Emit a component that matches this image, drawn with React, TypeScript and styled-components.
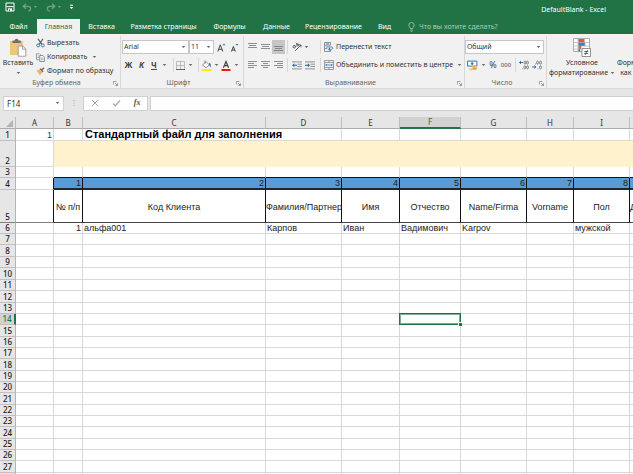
import React from "react";
import styled, { createGlobalStyle, css } from "styled-components";

const ui = `"Noto Sans", "Open Sans", sans-serif`;
const sheet = `"Liberation Sans", Arial, sans-serif`;
const green = "#217346";

const GlobalStyle = createGlobalStyle`
  *, *::before, *::after { box-sizing: border-box; }
  body { margin: 0; background: #e6e6e6; }
  button, select, input { font: inherit; color: inherit; margin: 0; padding: 0; border: 0; background: none; border-radius: 0; }
  svg { display: block; flex: none; }
`;

const Window = styled.div`
  display: flex;
  flex-direction: column;
  height: 100vh;
  overflow: hidden;
  font: 7px/10px ${ui};
  color: #333;
`;

/* ---------- title bar and tabs ---------- */

const TitleBar = styled.header`
  display: flex;
  align-items: center;
  flex: none;
  height: 19px;
  padding: 1px 27px 0 4px;
  background: ${green};
  color: #fff;
`;

const QuickAccess = styled.div`
  display: flex;
  align-items: center;
  height: 12px;
  gap: 4px;
  flex: 1;
  align-self: flex-start;
`;

const QuickButton = styled.button<{ $dim?: boolean; $w: number }>`
  display: flex;
  align-items: center;
  justify-content: center;
  gap: 1px;
  width: ${(p) => p.$w}px;
  height: 12px;
  opacity: ${(p) => (p.$dim ? 0.35 : 1)};
`;

const FileName = styled.h1`
  margin: 0;
  font: 7px/10px ${ui};
`;

const TabBar = styled.nav`
  display: flex;
  align-items: stretch;
  flex: none;
  height: 15px;
  background: ${green};
  color: #fff;
`;

const Tab = styled.button<{ $w: number; $active?: boolean }>`
  flex: none;
  width: ${(p) => p.$w}px;
  padding-top: 1px;
  text-align: center;
  white-space: nowrap;
  ${(p) => p.$active && css`background: #f1f1f1; color: ${green};`}
`;

const TellMe = styled.button`
  display: flex;
  align-items: center;
  gap: 4px;
  padding: 1px 0 0 8px;
  color: #a9cdb9;
  white-space: nowrap;
`;

/* ---------- ribbon ---------- */

const Ribbon = styled.section`
  display: flex;
  flex: none;
  height: 55px;
  overflow: hidden;
  background: #f1f1f1;
  border-bottom: 1px solid #d9d9d9;
`;

const Group = styled.section<{ $w: number }>`
  display: flex;
  flex-direction: column;
  flex: none;
  width: ${(p) => p.$w}px;
  margin-top: 2px;
  border-right: 1px solid #d8d8d8;
`;

const GroupBody = styled.div`
  flex: 1;
  display: flex;
  min-height: 0;
`;

const GroupFoot = styled.div`
  display: flex;
  align-items: center;
  flex: none;
  height: 10px;
  padding-right: 2px;
  color: #666;
`;

const GroupName = styled.h2`
  flex: 1;
  margin: 0;
  font: 7px/10px ${ui};
  text-align: center;
`;

const Lines = styled.div`
  display: flex;
  flex-direction: column;
  flex: 1;
  gap: 4px;
  padding-top: 4px;
`;

const ToolRow = styled.div`
  display: flex;
  align-items: center;
  flex: none;
  height: 14px;
`;

const Tool = styled.button<{ $w: number; $on?: boolean }>`
  display: flex;
  align-items: center;
  justify-content: center;
  flex: none;
  width: ${(p) => p.$w}px;
  height: 14px;
  background: ${(p) => (p.$on ? "#c6c6c6" : "transparent")};
`;

const Letter = styled.span<{ $kind: "bold" | "italic" | "underline" }>`
  font-size: 8px;
  font-weight: 700;
  color: #444;
  ${(p) => p.$kind === "italic" && css`font-style: italic;`}
  ${(p) => p.$kind === "underline" && css`text-decoration: underline;`}
`;

const Divider = styled.span<{ $left?: number; $right?: number }>`
  flex: none;
  width: 1px;
  height: 14px;
  margin: 0 ${(p) => p.$right ?? 0}px 0 ${(p) => p.$left ?? 0}px;
  background: #d8d8d8;
`;

const Labelled = styled.button`
  display: flex;
  align-items: center;
  gap: 2px;
  flex: none;
  height: 14px;
  white-space: nowrap;
`;

const MenuLabel = styled.span`
  margin-right: 3px;
`;

const ClipLines = styled.div`
  display: flex;
  flex-direction: column;
  align-items: flex-start;
`;

const BigTool = styled.button<{ $w: number }>`
  display: flex;
  flex-direction: column;
  align-items: center;
  flex: none;
  width: ${(p) => p.$w}px;
  padding-top: 2px;
  white-space: nowrap;
  gap: 1px;
`;

const BigLine = styled.span`
  display: flex;
  align-items: center;
  gap: 2px;
  height: 9px;
`;

const Picker = styled.label<{ $w: number }>`
  display: grid;
  grid-template: 100% / 1fr 7px;
  align-items: center;
  flex: none;
  width: ${(p) => p.$w}px;
  height: 14px;
  background: #fff;
  border: 1px solid #c6c6c6;

  select {
    grid-area: 1 / 1 / 2 / 3;
    appearance: none;
    width: 100%;
    height: 12px;
    padding-left: 1px;
    line-height: 12px;
  }
  svg { grid-area: 1 / 2; }
`;

/* ---------- formula bar ---------- */

const FormulaBar = styled.div`
  display: flex;
  align-items: center;
  flex: none;
  height: 28px;
  padding-left: 3px;
  background: #e6e6e6;
`;

const NameBox = styled.div`
  display: flex;
  align-items: center;
  width: 61px;
  height: 15px;
  padding-right: 3px;
  background: #fff;
  border: 1px solid #d0d0d0;

  input { flex: 1; min-width: 0; padding-left: 3px; outline: 0; height: 13px; font-size: 8px; }
`;

const FormulaTools = styled.div`
  display: flex;
  align-items: center;
  justify-content: space-around;
  width: 65px;
  height: 15px;
  margin-right: 2px;
  background: #fff;
  border: 1px solid #d0d0d0;
`;

const Grip = styled.span`
  width: 19px;
  display: flex;
  justify-content: center;
`;

const FormulaInput = styled.input`
  flex: 1;
  min-width: 0;
  height: 15px;
  background: #fff;
  border: 1px solid #d0d0d0;
  border-right: 0;
  outline: 0;
`;

/* ---------- sheet ---------- */

const Viewport = styled.main`
  flex: 1;
  min-height: 0;
  overflow: hidden;
  background: #fff;
`;

const Sheet = styled.table`
  width: 100%;
  min-width: 694px;
  table-layout: fixed;
  border-collapse: separate;
  border-spacing: 0;
  font: 9px/10px ${sheet};
  color: #222;
`;

const Col = styled.col<{ $w?: number }>`
  ${(p) => p.$w && css`width: ${p.$w}px;`}
`;

const Row = styled.tr<{ $h: number }>`
  height: ${(p) => p.$h}px;
`;

const ColHead = styled.th<{ $on?: boolean }>`
  padding: 0;
  font: 8px/10px ${ui};
  color: ${(p) => (p.$on ? green : "#333")};
  background: ${(p) => (p.$on ? "#d2d2d2" : "#e6e6e6")};
  border-right: 1px solid #bdbdbd;
  border-bottom: ${(p) => (p.$on ? `2px solid ${green}` : "1px solid #ababab")};
`;

const RowHead = styled.th<{ $on?: boolean; $freeze?: boolean }>`
  padding: 0;
  font: 500 8px/10px ${ui};
  vertical-align: bottom;
  text-align: center;
  color: ${(p) => (p.$on ? green : "#222")};
  background: ${(p) => (p.$on ? "#d2d2d2" : "#e6e6e6")};
  border-right: ${(p) => (p.$on ? `2px solid ${green}` : "1px solid #b4b4b4")};
  border-bottom: 1px solid ${(p) => (p.$freeze ? "#808080" : "#c0c0c0")};
`;

type Kind = "plain" | "edge" | "marker" | "title" | "band" | "top" | "number" | "head" | "freeze" | "active";

const kinds: Record<Kind, ReturnType<typeof css> | string> = {
  plain: "",
  edge: css`border-right-color: #111;`,
  marker: css`color: #1f3864;`,
  title: css`font-size: 11px; font-weight: 700; line-height: 11px; color: #000; padding-left: 2px;`,
  band: css`background: #fff2cc; border-color: #fff2cc;`,
  top: css`border-bottom-color: #111;`,
  number: css`background: #5b9bd5; border-right-color: #111; border-bottom: 2px solid #1c2733;`,
  head: css`border-right-color: #111; border-bottom-color: #444; text-align: center; padding: 1px 0 0;`,
  freeze: css`border-right-color: #111; border-bottom-color: #808080;`,
  active: css`
    position: relative;
    &::before {
      content: "";
      position: absolute;
      inset: -1px;
      border: 1px solid ${green};
      outline: 1px solid #7fae94;
      outline-offset: -2px;
    }
    &::after {
      content: "";
      position: absolute;
      right: -2px;
      bottom: -2px;
      width: 4px;
      height: 4px;
      background: ${green};
      border-top: 1px solid #fff;
      border-left: 1px solid #fff;
    }
  `,
};

const Cell = styled.td<{ $kind?: Kind; $right?: boolean }>`
  padding: 0 1px;
  white-space: nowrap;
  text-align: ${(p) => (p.$right ? "right" : "left")};
  border-right: 1px solid #d9d9d9;
  border-bottom: 1px solid #d9d9d9;
  ${(p) => kinds[p.$kind ?? "plain"]}
`;

/* ---------- icons ---------- */

const Chevron = ({ light }: { light?: boolean }) => (
  <svg width="5" height="4" viewBox="0 0 5 4"><path d="M.7 1h3.6L2.5 3z" fill={light ? "#fff" : "#666"} /></svg>
);

const SaveIcon = () => (
  <svg width="10" height="10" viewBox="0 0 10 10" fill="none" stroke="#fff">
    <path d="M1 1h8v8H1z" strokeWidth="1" /><path d="M1.5 4.6h7" strokeWidth="1" />
    <path d="M3 6.3h4V9H3z" fill="#fff" stroke="none" /><path d="M4 7.3h1V9H4z" fill={green} stroke="none" />
  </svg>
);

const UndoIcon = ({ flip }: { flip?: boolean }) => (
  <svg width="10" height="9" viewBox="0 0 10 9" fill="none" stroke="#fff" strokeWidth="1.2">
    <g transform={flip ? "translate(10 0) scale(-1 1)" : undefined}>
      <path d="M4 .8 1.2 3.3 4 5.8M1.4 3.3h4.4c4 0 3.6 4 .4 5" />
    </g>
  </svg>
);

const CustomizeIcon = () => (
  <svg width="5" height="6" viewBox="0 0 5 6" fill="#fff"><path d="M1 .8h3v1H1zM.7 3h3.6L2.5 5z" /></svg>
);

const BulbIcon = () => (
  <svg width="7" height="10" viewBox="0 0 7 10" fill="none" stroke="#a9cdb9" strokeWidth=".8">
    <path d="M2.3 6.6C2.3 5.4.8 4.8.8 3.2a2.7 2.7 0 0 1 5.4 0c0 1.6-1.5 2.2-1.5 3.4zM2.3 8h2.4M2.6 9.2h1.8" />
  </svg>
);

const PasteIcon = () => (
  <svg width="18" height="19" viewBox="0 0 18 19">
    <path d="M1 3h13v14H1z" fill="#efc47c" />
    <path d="M3.5 2.5h2.3a1.8 1.8 0 0 1 3.6 0h2.3V5H3.5z" fill="#6d6d6d" />
    <path d="M9.2 8h4.6l3 3v7.2H9.2z" fill="#fff" stroke="#8a8a8a" strokeWidth=".8" />
    <path d="M13.6 8v3.2h3.2" fill="none" stroke="#8a8a8a" strokeWidth=".8" />
  </svg>
);

const CutIcon = () => (
  <svg width="9" height="10" viewBox="0 0 9 10" fill="none">
    <path d="M2 .8 6 6.6M7 .8 3 6.6" stroke="#555" strokeWidth="1.1" />
    <circle cx="2.2" cy="7.4" r="1.5" stroke="#3f7fb8" /><circle cx="6.8" cy="7.4" r="1.5" stroke="#3f7fb8" />
  </svg>
);

const CopyIcon = () => (
  <svg width="9" height="9" viewBox="0 0 9 9" fill="#fff" strokeWidth=".7">
    <path d="M.5.8h3l1.3 1.3v4.6H.5z" stroke="#777" /><path d="M1.4 3h2M1.4 4.5h2" stroke="#4a86bd" />
    <path d="M3.8 2.5h3l1.6 1.6v4.4H3.8z" stroke="#666" /><path d="M4.8 5h2.6M4.8 6.7h2.6" stroke="#4a86bd" />
  </svg>
);

const BrushIcon = () => (
  <svg width="9" height="9" viewBox="0 0 9 9">
    <path d="m.4 3.8 3-1.6 2.8 3.4L4 8.6z" fill="#efb765" /><path d="m3.6 2 1.2-.8 2.8 3.2-1 1z" fill="#666" />
    <path d="m6 2.7 2-2" stroke="#666" strokeWidth="1.5" />
  </svg>
);

const LauncherIcon = () => (
  <svg width="5" height="5" viewBox="0 0 5 5" fill="none" stroke="#777" strokeWidth=".7">
    <path d="M.4 3.5V.5h3M2 2l2.3 2.3M4.5 2.3v2.2H2.3" />
  </svg>
);

const GrowIcon = ({ small }: { small?: boolean }) => (
  <svg width="9" height="9" viewBox="0 0 9 9" fill="none">
    {small
      ? <path d="m1.4 8.5 2-5 2 5M2 7h2.8" stroke="#444" />
      : <path d="m.8 8.5 2.5-6.7 2.5 6.7M1.6 6.3h3.5" stroke="#444" />}
    <path d={small ? "M5.5 1h3L7 2.7z" : "M5.5 2.3h3L7 .6z"} fill="#2f75b5" />
  </svg>
);

const BorderIcon = () => (
  <svg width="9" height="9" viewBox="0 0 9 9" fill="none">
    <path d="M.5.5h8v8M.5.5v8M4.5.5v8M.5 4.5h8" stroke="#a8a8a8" strokeWidth=".7" /><path d="M0 8.5h9" stroke="#666" />
  </svg>
);

const FillIcon = () => (
  <svg width="11" height="11" viewBox="0 0 11 11">
    <path d="m1.5 5 3.6-3.4L8.4 5 5 7.7z" fill="#fff" stroke="#777" strokeWidth=".8" />
    <path d="M4 .6v3" stroke="#666" strokeWidth=".8" /><path d="M8 3c2 0 2 2 1.5 4.4L8 5z" fill="#3876ad" />
    <path d="M.5 9h10v2H.5z" fill="#ffed00" />
  </svg>
);

const FontColorIcon = () => (
  <svg width="10" height="11" viewBox="0 0 10 11">
    <path d="m2.4 7.8 2.6-6.3 2.6 6.3M3.3 5.6h3.4" fill="none" stroke="#444" strokeWidth="1.2" />
    <path d="M.5 9h9v2h-9z" fill="#f11414" />
  </svg>
);

const bars: Record<string, string> = {
  top: "M0 1.5h9M1 3.5h7M0 5.5h9",
  middle: "M0 2.5h9M1 4.5h7M0 6.5h9",
  bottom: "M0 4.5h9M1 6.5h7M0 8.5h9",
  left: "M0 1.5h9M0 3.5h6M0 5.5h9M0 7.5h6",
  center: "M0 1.5h9M2 3.5h5M0 5.5h9M2 7.5h5",
  right: "M0 1.5h9M3 3.5h6M0 5.5h9M3 7.5h6",
};

const BarsIcon = ({ kind }: { kind: string }) => (
  <svg width="9" height="10" viewBox="0 0 9 10" fill="none"><path d={bars[kind]} stroke="#777" strokeWidth=".8" /></svg>
);

const OrientationIcon = () => (
  <svg width="10" height="10" viewBox="0 0 10 10" fill="none" stroke="#555" strokeWidth=".9">
    <path d="m3 9 6-6M6.8 3H9v2.2" /><circle cx="2.2" cy="4.8" r="1.2" /><path d="m2.6 3.2 1.6 1.8M4 .8l2.4 2.6" />
    <circle cx="5.6" cy="2.8" r="1" />
  </svg>
);

const IndentIcon = ({ more }: { more?: boolean }) => (
  <svg width="10" height="9" viewBox="0 0 10 9" fill="none">
    <path d="M0 .9h10M5.5 3.2H10M5.5 5.5H10M0 7.9h10" stroke="#777" strokeWidth=".8" />
    <path d={more ? "M0 4.3h3.6" : "M1.4 4.3H5"} stroke="#2f75b5" strokeWidth="1.2" />
    <path d={more ? "m2.8 2.2 2.4 2.1-2.4 2.1z" : "M2.4 2.2 0 4.3l2.4 2.1z"} fill="#2f75b5" />
  </svg>
);

const WrapIcon = () => (
  <svg width="10" height="10" viewBox="0 0 10 10" fill="none">
    <path d="M.5.5h6M.5.5v9M.5 3.2h6V.5M.5 6.6h3M.5 9.5h6V8" stroke="#777" strokeWidth=".8" />
    <path d="M2 1.900h3M2 5h5.500c1.800 0 1.800 2.300 0 2.300H5" stroke="#3f7fb8" strokeWidth=".9" />
    <path d="M6 5.600 4 7.300 6 9z" fill="#2f75b5" />
  </svg>
);

const MergeIcon = () => (
  <svg width="10" height="10" viewBox="0 0 10 10" fill="none">
    <path d="M.5.5h9v9h-9zM.5 2.500h9M.5 7.500h9M5 .5v2M5 7.500v2" stroke="#888" strokeWidth=".8" />
    <path d="M2.500 5h5" stroke="#2f75b5" strokeWidth=".8" /><path d="m1 5 1.800-1.300v2.600zM9 5 7.200 3.700v2.600z" fill="#2f75b5" />
  </svg>
);

const MoneyIcon = () => (
  <svg width="11" height="11" viewBox="0 0 11 11">
    <path d="M.6 1.100h9.300v5H.6z" fill="#fff" stroke="#2f75b5" strokeWidth="1" />
    <circle cx="5.200" cy="3.600" r="1.300" fill="#2f75b5" />
    <ellipse cx="7.500" cy="6.800" rx="2.600" ry="1.200" fill="#efb765" /><ellipse cx="7.500" cy="8.800" rx="2.600" ry="1.200" fill="#e3a750" />
    <ellipse cx="4" cy="9.300" rx="2" ry="1.100" fill="#efc47c" />
  </svg>
);

const DecimalIcon = ({ less }: { less?: boolean }) => (
  <svg width="10" height="10" viewBox="0 0 10 10" fill="none" strokeWidth=".8">
    <g stroke="#666">
      <ellipse cx={less ? 5.5 : 6} cy="2.600" rx=".9" ry="1.600" /><ellipse cx="8.500" cy="2.600" rx=".9" ry="1.600" />
      <ellipse cx={less ? 8.5 : 5.8} cy="7.300" rx=".9" ry="1.600" />
      {!less && <ellipse cx="8.500" cy="7.300" rx=".9" ry="1.600" />}
      <path d={less ? "M6 8.500v.8M3.500 3.600v.8" : "M3.600 8.500v.8"} />
    </g>
    <path d={less ? "M0 7h3.500M2.300 5.600 4 7 2.300 8.400" : "M.6 2.500h3.400M2 1.100.4 2.500 2 3.900"} stroke="#2f75b5" strokeWidth="1" />
  </svg>
);

const ConditionalIcon = () => (
  <svg width="18" height="19" viewBox="0 0 18 19" fill="none">
    <path d="M.5.5h16v13H.5z" fill="#fff" stroke="#999" strokeWidth=".8" />
    <path d="M5.300 1h6v3.500h-6z" fill="#e0593f" /><path d="M5.300 4.500h7V8h-7z" fill="#3f7fc0" />
    <path d="M5.300 8h3v3h-3z" fill="#e0593f" /><path d="M5.300 11h2v2.500h-2z" fill="#3f7fc0" />
    <path d="M.5 4.500h16M.5 8h16M.5 11h8M5 .5v13M11.500 .5v8" stroke="#aaa" strokeWidth=".6" />
    <path d="M9 10.500h8.500v8H9z" fill="#fff" stroke="#777" strokeWidth=".8" />
    <path d="M11.200 13.500h4M11.200 15.500h4M14.500 12 12 17" stroke="#444" strokeWidth=".8" />
  </svg>
);

const TableIcon = () => (
  <svg width="18" height="19" viewBox="0 0 18 19" fill="none">
    <path d="M.5.5h16v16H.5z" fill="#fff" stroke="#999" /><path d="M5 5h11v11H5z" fill="#9dc3e6" />
    <path d="M.5 5h16M.5 10h16M5 .5v16M11 .5v16" stroke="#999" />
  </svg>
);

const CellStylesIcon = () => (
  <svg width="18" height="19" viewBox="0 0 18 19" fill="none">
    <path d="M.5.5h16v16H.5z" fill="#fff" stroke="#999" /><path d="M5 5h7v5H5z" fill="#f4b183" />
    <path d="M.5 5h16M.5 10h16M5 .5v16M12 .5v16" stroke="#999" />
  </svg>
);

const CancelIcon = () => (
  <svg width="8" height="8" viewBox="0 0 8 8"><path d="m1 1 6 6M7 1 1 7" stroke="#aaa" /></svg>
);
const AcceptIcon = () => (
  <svg width="9" height="8" viewBox="0 0 9 8" fill="none"><path d="m1 4.500 2.300 2.300L8 1.500" stroke="#aaa" strokeWidth="1.300" /></svg>
);
const GripIcon = () => (
  <svg width="2" height="8" viewBox="0 0 2 8" fill="#aaa"><path d="M.5 1h1v1h-1zM.5 3.500h1v1h-1zM.5 6h1v1h-1z" /></svg>
);
const CornerIcon = () => (
  <svg width="15" height="10" viewBox="0 0 15 10"><path d="M13 2v7H6z" fill="#b4b4b4" /></svg>
);

const FxLabel = styled.span`
  font: italic 700 8px/10px "Liberation Serif", serif;
  color: #555;
`;

const Glyph = styled.span<{ $size: number }>`
  font-size: ${(p) => p.$size}px;
  color: #444;
`;

/* ---------- data ---------- */

const columns: [string, number | undefined][] = [
  ["A", 38], ["B", 29], ["C", 183], ["D", 76], ["E", 58], ["F", 61], ["G", 66], ["H", 47], ["I", 56], ["J", undefined],
];

const headings = ["№ п/п", "Код Клиента", "Фамилия/Партнер", "Имя", "Отчество", "Name/Firma", "Vorname", "Пол", "Дата рождения"];
const record = ["1", "альфа001", "Карпов", "Иван", "Вадимович", "Karpov", "", "мужской", ""];

const tabs: [string, number][] = [
  ["Файл", 37], ["Главная", 43], ["Вставка", 43], ["Разметка страницы", 81], ["Формулы", 51],
  ["Данные", 43], ["Рецензирование", 71], ["Вид", 31],
];

const rowHeight = (n: number) => (n < 13 ? (n % 2 ? 11 : 12) : n % 3 ? 11 : 12);
const emptyRows = Array.from({ length: 34 }, (_, i) => i + 7);

const Foot = ({ name, launcher = true }: { name: string; launcher?: boolean }) => (
  <GroupFoot>
    <GroupName>{name}</GroupName>
    {launcher && <button type="button" aria-label={name}><LauncherIcon /></button>}
  </GroupFoot>
);

const Menu = ({ label, w = 8 }: { label: string; w?: number }) => (
  <Tool type="button" $w={w} aria-label={label}><Chevron /></Tool>
);

const FontLines = styled(Lines)`padding-left: 1px;`;
const AlignLines = styled(Lines)`padding-left: 2px;`;
const Push = styled.span`flex: 1;`;

export default function App() {
  return (
    <Window>
      <GlobalStyle />
      <TitleBar>
        <QuickAccess>
          <QuickButton type="button" $w={12} aria-label="Сохранить"><SaveIcon /></QuickButton>
          <QuickButton type="button" $w={20} $dim aria-label="Отменить"><UndoIcon /><Chevron light /></QuickButton>
          <QuickButton type="button" $w={20} $dim aria-label="Вернуть"><UndoIcon flip /><Chevron light /></QuickButton>
          <QuickButton type="button" $w={6} aria-label="Настройка панели"><CustomizeIcon /></QuickButton>
        </QuickAccess>
        <FileName>DefaultBlank - Excel</FileName>
      </TitleBar>

      <TabBar>
        {tabs.map(([name, w]) => (
          <Tab key={name} type="button" $w={w} $active={name === "Главная"}>{name}</Tab>
        ))}
        <TellMe type="button"><BulbIcon />Что вы хотите сделать?</TellMe>
      </TabBar>

      <Ribbon>
        <Group $w={121}>
          <GroupBody>
            <BigTool type="button" $w={36}>
              <PasteIcon />
              <BigLine>Вставить</BigLine>
              <BigLine><Chevron /></BigLine>
            </BigTool>
            <ClipLines>
              <Labelled type="button"><CutIcon />Вырезать</Labelled>
              <Labelled type="button"><CopyIcon /><MenuLabel>Копировать</MenuLabel><Chevron /></Labelled>
              <Labelled type="button"><BrushIcon />Формат по образцу</Labelled>
            </ClipLines>
          </GroupBody>
          <Foot name="Буфер обмена" />
        </Group>

        <Group $w={123}>
          <GroupBody>
            <FontLines>
              <ToolRow>
                <Picker $w={67}><select aria-label="Шрифт"><option>Arial</option></select><Chevron /></Picker>
                <Picker $w={25}><select aria-label="Размер"><option>11</option></select><Chevron /></Picker>
                <Tool type="button" $w={15} aria-label="Увеличить"><GrowIcon /></Tool>
                <Tool type="button" $w={11} aria-label="Уменьшить"><GrowIcon small /></Tool>
              </ToolRow>
              <ToolRow>
                <Tool type="button" $w={13}><Letter $kind="bold">Ж</Letter></Tool>
                <Tool type="button" $w={13}><Letter $kind="italic">К</Letter></Tool>
                <Tool type="button" $w={12}><Letter $kind="underline">Ч</Letter></Tool>
                <Menu label="Подчеркивание" />
                <Divider $left={5} $right={1} />
                <Tool type="button" $w={11} aria-label="Границы"><BorderIcon /></Tool>
                <Menu label="Границы: меню" />
                <Divider $left={4} $right={2} />
                <Tool type="button" $w={11} aria-label="Заливка"><FillIcon /></Tool>
                <Menu label="Заливка: меню" />
                <Tool type="button" $w={12} aria-label="Цвет текста"><FontColorIcon /></Tool>
                <Menu label="Цвет текста: меню" />
              </ToolRow>
            </FontLines>
          </GroupBody>
          <Foot name="Шрифт" />
        </Group>

        <Group $w={221}>
          <GroupBody>
            <AlignLines>
              <ToolRow>
                <Tool type="button" $w={13} aria-label="По верхнему краю"><BarsIcon kind="top" /></Tool>
                <Tool type="button" $w={13} aria-label="По середине"><BarsIcon kind="middle" /></Tool>
                <Tool type="button" $w={13} $on aria-label="По нижнему краю"><BarsIcon kind="bottom" /></Tool>
                <Divider $left={2} $right={3} />
                <Tool type="button" $w={11} aria-label="Ориентация"><OrientationIcon /></Tool>
                <Menu label="Ориентация: меню" />
                <Divider $left={10} $right={3} />
                <Labelled type="button"><WrapIcon />Перенести текст</Labelled>
              </ToolRow>
              <ToolRow>
                <Tool type="button" $w={13} aria-label="По левому краю"><BarsIcon kind="left" /></Tool>
                <Tool type="button" $w={13} aria-label="По центру"><BarsIcon kind="center" /></Tool>
                <Tool type="button" $w={13} aria-label="По правому краю"><BarsIcon kind="right" /></Tool>
                <Divider $left={2} $right={3} />
                <Tool type="button" $w={11} aria-label="Уменьшить отступ"><IndentIcon /></Tool>
                <Tool type="button" $w={15} aria-label="Увеличить отступ"><IndentIcon more /></Tool>
                <Divider $left={3} $right={3} />
                <Labelled type="button"><MergeIcon />Объединить и поместить в центре</Labelled>
                <Push />
                <Menu label="Объединить: меню" w={13} />
              </ToolRow>
            </AlignLines>
          </GroupBody>
          <Foot name="Выравнивание" />
        </Group>

        <Group $w={82}>
          <GroupBody>
            <Lines>
              <ToolRow>
                <Picker $w={79}><select aria-label="Числовой формат"><option>Общий</option></select><Chevron /></Picker>
              </ToolRow>
              <ToolRow>
                <Tool type="button" $w={14} aria-label="Денежный формат"><MoneyIcon /></Tool>
                <Menu label="Денежный формат: меню" />
                <Tool type="button" $w={12}><Glyph $size={9}>%</Glyph></Tool>
                <Tool type="button" $w={14}><Glyph $size={6}>000</Glyph></Tool>
                <Divider $left={2} $right={2} />
                <Tool type="button" $w={12} aria-label="Увеличить разрядность"><DecimalIcon /></Tool>
                <Tool type="button" $w={14} aria-label="Уменьшить разрядность"><DecimalIcon less /></Tool>
              </ToolRow>
            </Lines>
          </GroupBody>
          <Foot name="Число" />
        </Group>

        <Group $w={204}>
          <GroupBody>
            <BigTool type="button" $w={70}>
              <ConditionalIcon />
              <BigLine>Условное</BigLine>
              <BigLine>форматирование<Chevron /></BigLine>
            </BigTool>
            <BigTool type="button" $w={54}>
              <TableIcon />
              <BigLine>Форматировать</BigLine>
              <BigLine>как таблицу<Chevron /></BigLine>
            </BigTool>
            <BigTool type="button" $w={54}>
              <CellStylesIcon />
              <BigLine>Стили</BigLine>
              <BigLine>ячеек<Chevron /></BigLine>
            </BigTool>
          </GroupBody>
          <Foot name="Стили" launcher={false} />
        </Group>
      </Ribbon>

      <FormulaBar>
        <NameBox><input aria-label="Имя ячейки" defaultValue="F14" /><Chevron /></NameBox>
        <Grip><GripIcon /></Grip>
        <FormulaTools>
          <button type="button" aria-label="Отмена"><CancelIcon /></button>
          <button type="button" aria-label="Ввод"><AcceptIcon /></button>
          <button type="button"><FxLabel>fx</FxLabel></button>
        </FormulaTools>
        <FormulaInput aria-label="Строка формул" />
      </FormulaBar>

      <Viewport>
        <Sheet>
          <colgroup>
            <Col $w={16} />
            {columns.map(([name, w]) => <Col key={name} $w={w} />)}
          </colgroup>
          <thead>
            <Row $h={12}>
              <ColHead aria-label="Выделить все"><CornerIcon /></ColHead>
              {columns.map(([name]) => <ColHead key={name} scope="col" $on={name === "F"}>{name}</ColHead>)}
            </Row>
          </thead>
          <tbody>
            <Row $h={12}>
              <RowHead scope="row">1</RowHead>
              <Cell $kind="marker" $right>1</Cell>
              <Cell />
              <Cell $kind="title" colSpan={2}>Стандартный файл для заполнения</Cell>
              {columns.slice(4).map(([name]) => <Cell key={name} />)}
            </Row>
            <Row $h={26}>
              <RowHead scope="row">2</RowHead>
              <Cell />
              <Cell $kind="band" colSpan={9} />
            </Row>
            <Row $h={11}>
              <RowHead scope="row">3</RowHead>
              <Cell />
              {columns.slice(1).map(([name]) => <Cell key={name} $kind="top" />)}
            </Row>
            <Row $h={12}>
              <RowHead scope="row">4</RowHead>
              <Cell $kind="edge" />
              {headings.map((name, i) => <Cell key={name} $kind="number" $right>{i + 1}</Cell>)}
            </Row>
            <Row $h={33}>
              <RowHead scope="row" $freeze>5</RowHead>
              <Cell $kind="freeze" />
              {headings.map((name) => <Cell key={name} $kind="head">{name}</Cell>)}
            </Row>
            <Row $h={11}>
              <RowHead scope="row">6</RowHead>
              <Cell />
              {record.map((value, i) => <Cell key={i} $right={i === 0}>{value}</Cell>)}
            </Row>
            {emptyRows.map((n) => (
              <Row key={n} $h={rowHeight(n)}>
                <RowHead scope="row" $on={n === 14}>{n}</RowHead>
                {columns.map(([name]) => (
                  <Cell key={name} $kind={n === 14 && name === "F" ? "active" : "plain"} />
                ))}
              </Row>
            ))}
          </tbody>
        </Sheet>
      </Viewport>
    </Window>
  );
}
